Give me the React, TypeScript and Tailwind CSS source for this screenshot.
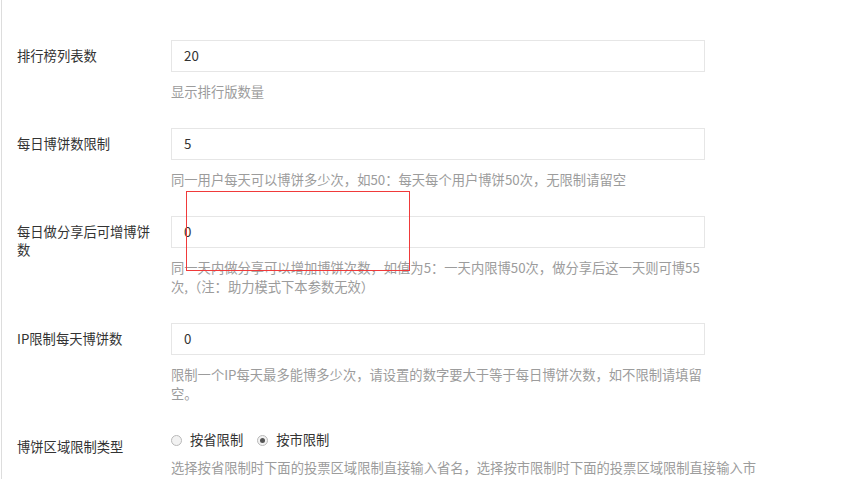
import React from "react"

const font = { fontFamily: '"Noto Sans CJK SC", "Noto Sans", sans-serif' }

type Row = {
  label: string
  value?: string
  help: string
  radio?: boolean
}

const rows: Row[] = [
  { label: "排行榜列表数", value: "20", help: "显示排行版数量" },
  { label: "每日博饼数限制", value: "5", help: "同一用户每天可以博饼多少次，如50：每天每个用户博饼50次，无限制请留空" },
  {
    label: "每日做分享后可增博饼数",
    value: "0",
    help: "同一天内做分享可以增加博饼次数，如值为5：一天内限博50次，做分享后这一天则可博55次,（注：助力模式下本参数无效）",
  },
  {
    label: "IP限制每天博饼数",
    value: "0",
    help: "限制一个IP每天最多能博多少次，请设置的数字要大于等于每日博饼次数，如不限制请填留空。",
  },
  {
    label: "博饼区域限制类型",
    radio: true,
    help: "选择按省限制时下面的投票区域限制直接输入省名，选择按市限制时下面的投票区域限制直接输入市名",
  },
]

function Radio({ checked, label }: { checked?: boolean; label: string }) {
  return (
    <label className="flex items-center gap-[8px]">
      <span className="flex h-[11px] w-[11px] items-center justify-center rounded-full border border-[#b9b9b9] bg-[#f2f2f2]">
        {checked && <span className="h-[5px] w-[5px] rounded-full bg-[#555]" />}
      </span>
      <span>{label}</span>
    </label>
  )
}

export default function App() {
  return (
    <div className="relative h-[479px] w-[854px] overflow-hidden bg-white text-[13.3px] text-[#333]" style={font}>
      <div className="ml-px h-full border-l border-[#ddd] pl-[15px] pt-[40px]">
        {rows.map((r) => (
          <div key={r.label} className="mb-[27px] flex">
            <div className={`w-[154px] shrink-0 pr-[15px] leading-[18px] ${r.radio ? "pt-[8px]" : "pt-[7px]"}`}>
              {r.label}
            </div>
            <div className={r.radio ? "w-[590px]" : "w-[534px]"}>
              {r.radio ? (
                <div className="flex h-[20px] items-center gap-[14px]">
                  <Radio label="按省限制" />
                  <Radio checked label="按市限制" />
                </div>
              ) : (
                <div className="flex h-[32px] items-center border border-[#e6e6e6] px-[12px] leading-[18px]">
                  {r.value}
                </div>
              )}
              <p className={`${r.radio ? "mt-[8px]" : "mt-[10px]"} leading-[19px] text-[#9c9c9c]`}>{r.help}</p>
            </div>
          </div>
        ))}
      </div>
      <div className="absolute left-[186px] top-[191px] h-[80px] w-[224px] border border-[#f03a3a]" />
    </div>
  )
}
